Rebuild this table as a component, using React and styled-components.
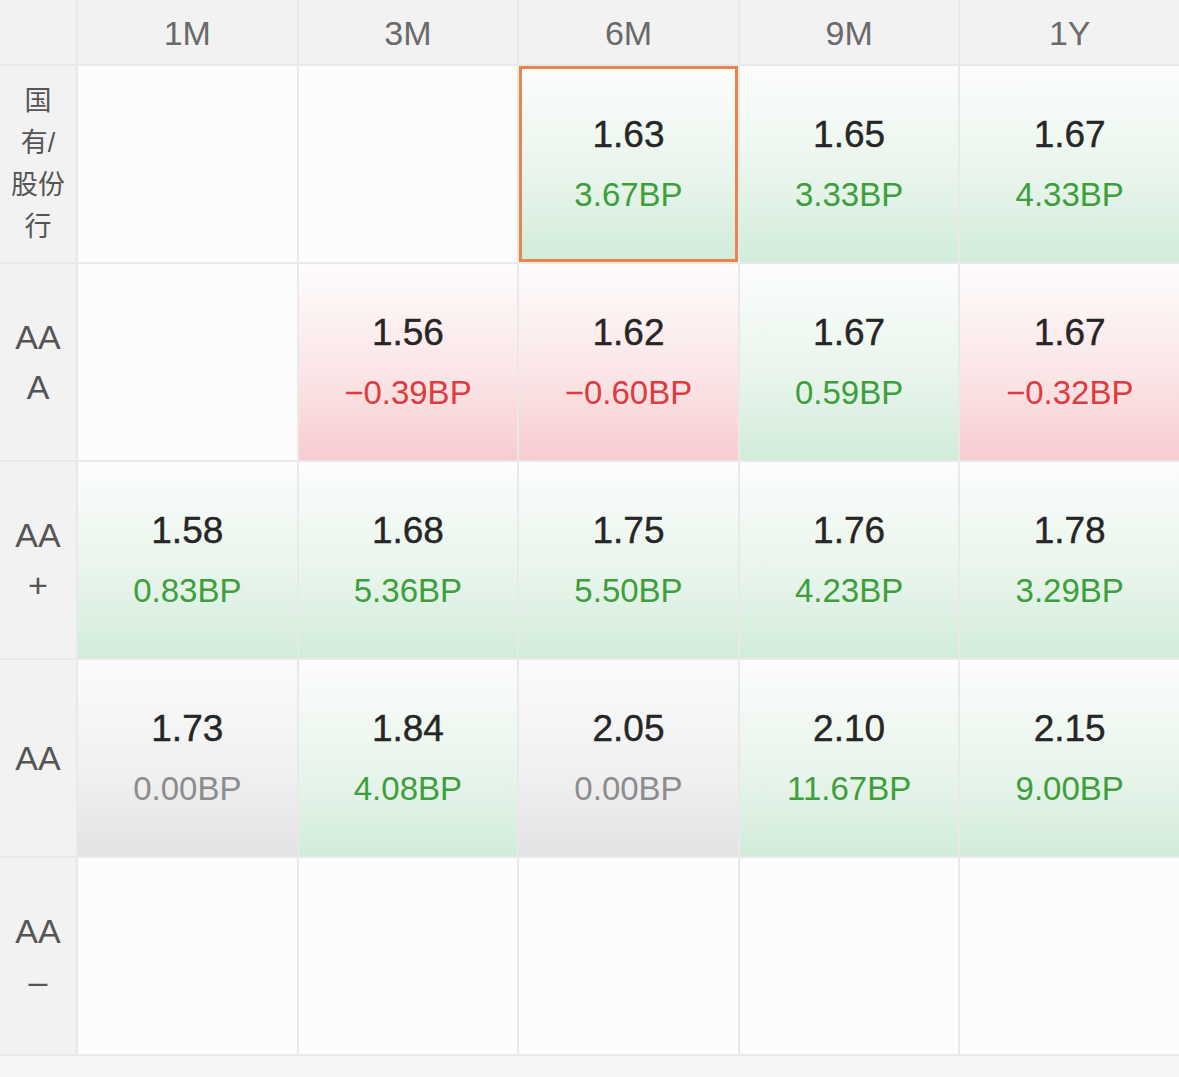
import React from 'react';
import styled, { createGlobalStyle } from 'styled-components';

const GlobalStyle = createGlobalStyle`
  html, body {
    margin: 0;
    padding: 0;
    background: #f5f6f8;
  }
  body {
    font-family: "Liberation Sans", "Noto Sans CJK SC", sans-serif;
  }
`;

const Page = styled.div`
  width: 1179px;
  min-height: 1077px;
  background: #f5f6f8;
`;

const Grid = styled.div`
  display: grid;
  grid-template-columns: 76px repeat(5, 1fr);
  grid-template-rows: 64px repeat(5, 196px);
  gap: 2px;
  padding-bottom: 2px;
  background: #e9e9e9;
`;

const Corner = styled.div`
  background: #f2f2f2;
`;

const HeadCell = styled.div`
  display: flex;
  align-items: center;
  justify-content: center;
  background: #f2f2f2;
  color: #6a6a6a;
  font-size: 34px;
  padding-top: 3px;
`;

const RowLabel = styled.div`
  display: flex;
  flex-direction: column;
  align-items: center;
  justify-content: center;
  background: #f2f2f2;
  color: #555;
  font-size: ${ ({ cjk }) => cjk ? '27px' : '34px' };
  line-height: ${ ({ cjk }) => cjk ? '42px' : '50px' };
`;

const backgrounds = {
  up: 'linear-gradient(180deg, #fcfdfc 0%, #e9f5ec 55%, #d2ecda 100%)',
  down: 'linear-gradient(180deg, #fefcfc 0%, #fbe6e7 55%, #f7ccd0 100%)',
  flat: 'linear-gradient(180deg, #fbfbfb 0%, #f1f1f2 55%, #e3e3e5 100%)',
  empty: '#fcfcfc'
};

const deltaColors = {
  up: '#3d9f3b',
  down: '#de3b3f',
  flat: '#8c8c8c'
};

const Cell = styled.div`
  display: flex;
  flex-direction: column;
  align-items: center;
  justify-content: center;
  box-sizing: border-box;
  background: ${ ({ trend }) => backgrounds[trend] };
  border: ${ ({ selected }) => selected ? '3px solid #e8854f' : 'none' };
`;

const Value = styled.div`
  color: #262626;
  font-size: 37px;
  line-height: 44px;
  -webkit-text-stroke: 0.4px #262626;
`;

const Delta = styled.div`
  margin-top: 18px;
  color: ${ ({ trend }) => deltaColors[trend] };
  font-size: 33px;
  line-height: 40px;
`;

const tenors = ['1M', '3M', '6M', '9M', '1Y'];

const rows = [
  {
    label: ['国', '有/', '股份', '行'],
    cjk: true,
    cells: [
      null,
      null,
      { v: '1.63', d: '3.67BP', t: 'up', selected: true },
      { v: '1.65', d: '3.33BP', t: 'up' },
      { v: '1.67', d: '4.33BP', t: 'up' }
    ]
  },
  {
    label: ['AA', 'A'],
    cells: [
      null,
      { v: '1.56', d: '−0.39BP', t: 'down' },
      { v: '1.62', d: '−0.60BP', t: 'down' },
      { v: '1.67', d: '0.59BP', t: 'up' },
      { v: '1.67', d: '−0.32BP', t: 'down' }
    ]
  },
  {
    label: ['AA', '+'],
    cells: [
      { v: '1.58', d: '0.83BP', t: 'up' },
      { v: '1.68', d: '5.36BP', t: 'up' },
      { v: '1.75', d: '5.50BP', t: 'up' },
      { v: '1.76', d: '4.23BP', t: 'up' },
      { v: '1.78', d: '3.29BP', t: 'up' }
    ]
  },
  {
    label: ['AA'],
    cells: [
      { v: '1.73', d: '0.00BP', t: 'flat' },
      { v: '1.84', d: '4.08BP', t: 'up' },
      { v: '2.05', d: '0.00BP', t: 'flat' },
      { v: '2.10', d: '11.67BP', t: 'up' },
      { v: '2.15', d: '9.00BP', t: 'up' }
    ]
  },
  {
    label: ['AA', '–'],
    cells: [null, null, null, null, null]
  }
];

const renderCell = (cell, key) => {
  if (!cell) {
    return <Cell key={ key } trend='empty' />;
  }

  return (
    <Cell key={ key } trend={ cell.t } selected={ cell.selected }>
      <Value>{ cell.v }</Value>
      <Delta trend={ cell.t }>{ cell.d }</Delta>
    </Cell>
  );
};

const App = () => (
  <Page>
    <GlobalStyle />
    <Grid>
      <Corner />
      { tenors.map((tenor) => <HeadCell key={ tenor }>{ tenor }</HeadCell>) }

      { rows.map((row, r) => (
        <React.Fragment key={ r }>
          <RowLabel cjk={ row.cjk }>
            { row.label.map((line, i) => <span key={ i }>{ line }</span>) }
          </RowLabel>
          { row.cells.map((cell, c) => renderCell(cell, `${ r }-${ c }`)) }
        </React.Fragment>
      )) }
    </Grid>
  </Page>
);

export default App;
